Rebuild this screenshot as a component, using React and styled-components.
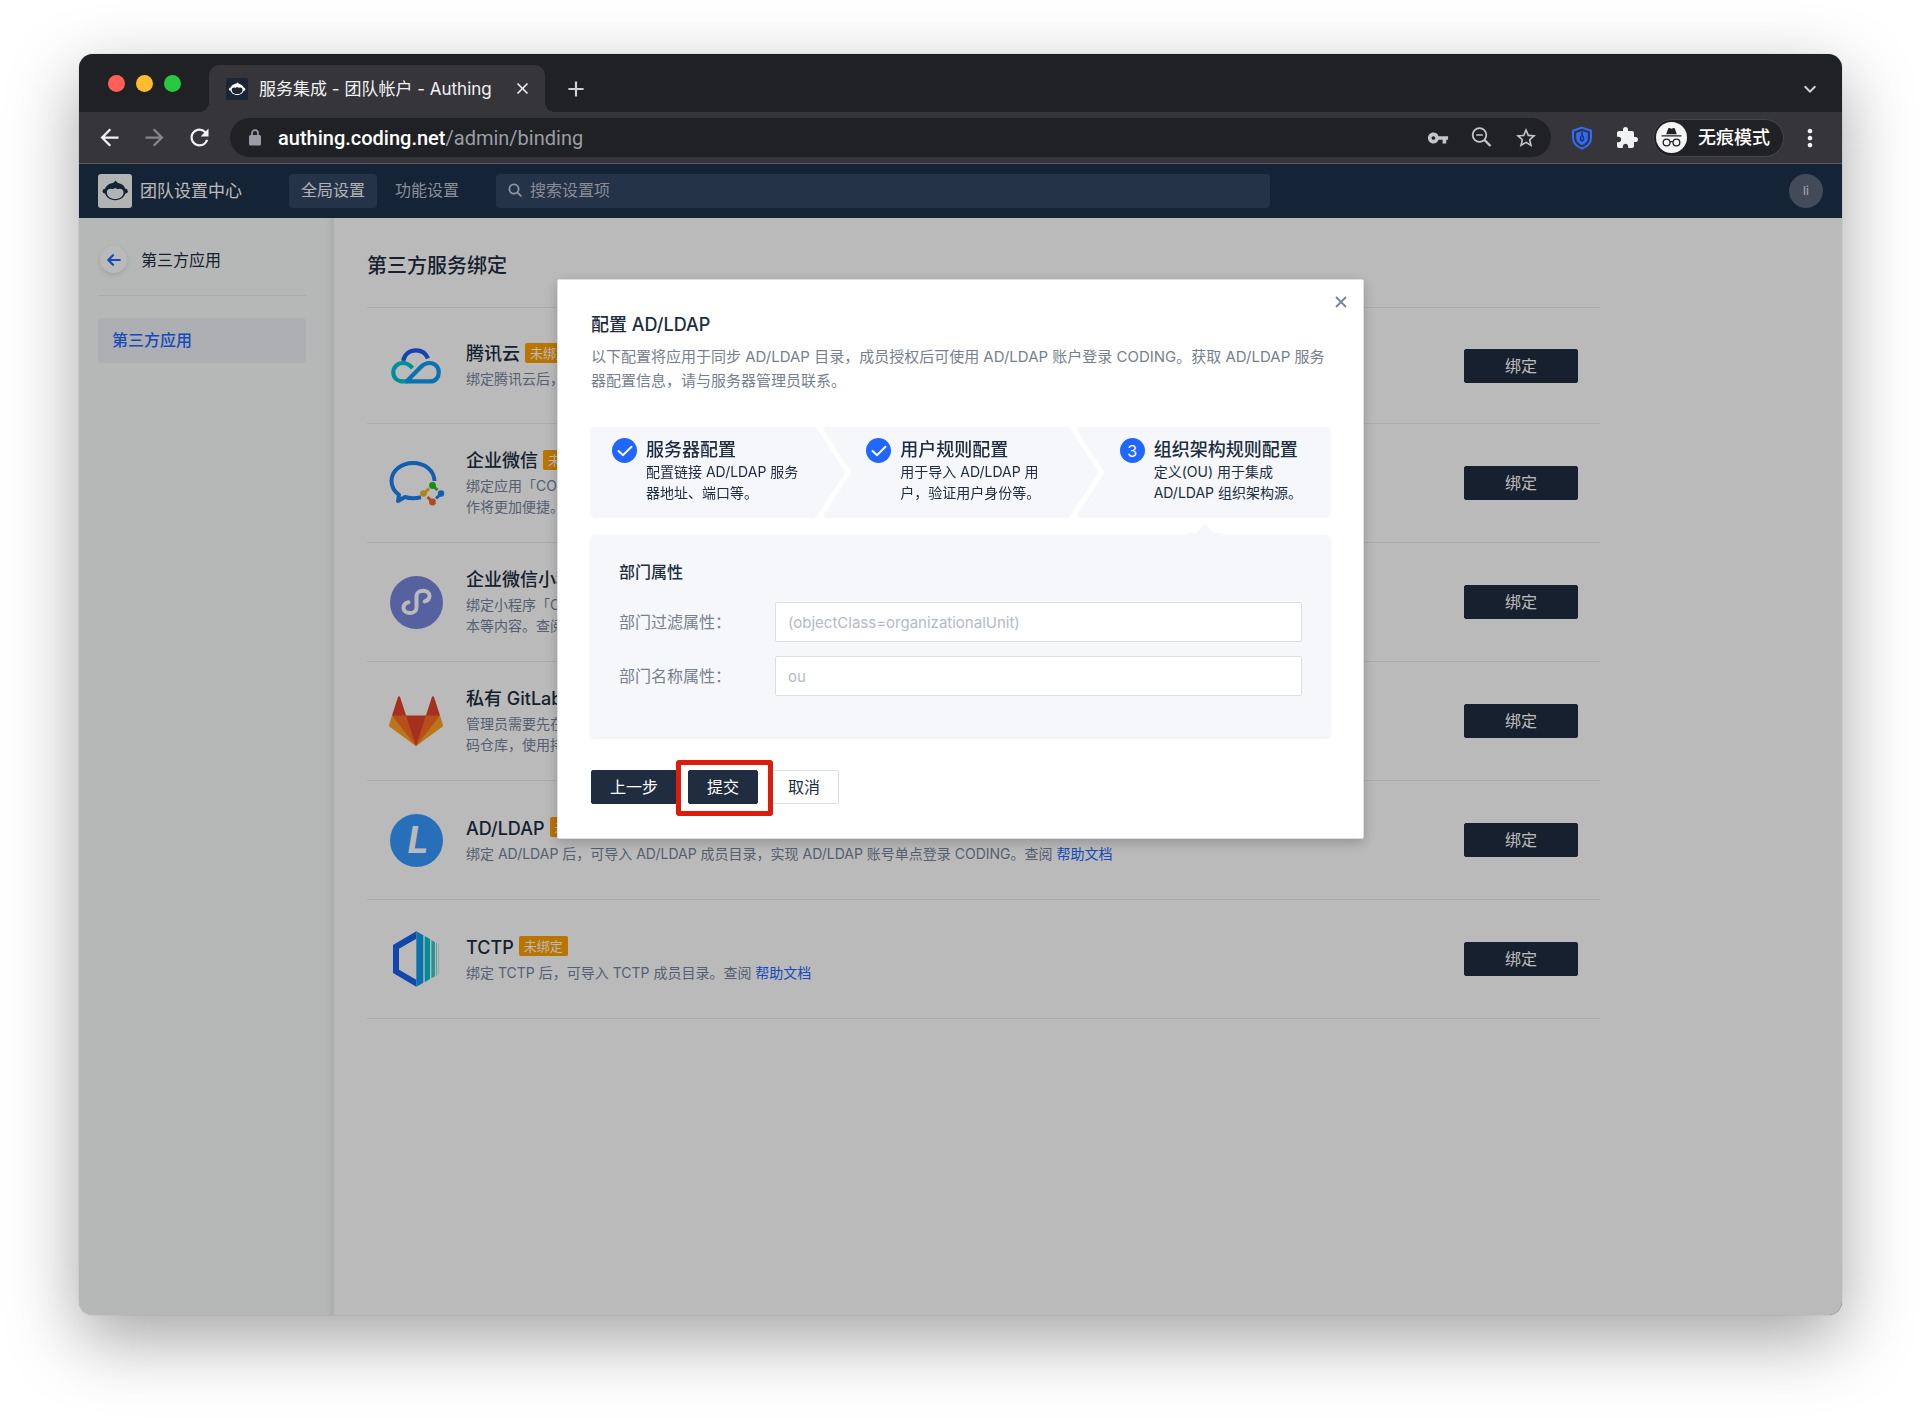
import React from "react";
import styled, { createGlobalStyle, css } from "styled-components";
import {
  MdAdd,
  MdArrowBack,
  MdArrowForward,
  MdClose,
  MdExtension,
  MdKeyboardArrowDown,
  MdMoreVert,
  MdRefresh,
  MdStarOutline,
  MdVpnKey,
} from "react-icons/md";

const ink = "#202d40";
const muted = "#76808e";
const blue = "#2066ff";

const GlobalStyle = createGlobalStyle`
  *, *::before, *::after { box-sizing: border-box; }
  body {
    margin: 0;
    background: #fff;
    color: ${ink};
    font: 400 16px/24px Inter, "Noto Sans CJK SC", sans-serif;
  }
  button, input { font: inherit; }
  a { color: inherit; text-decoration: none; }
  h1, h2, h3, p, ul { margin: 0; padding: 0; }
  svg { display: block; flex: none; }
`;

/* ---------- browser window ---------- */

const Desktop = styled.div`
  display: flex;
  min-height: 100vh;
  padding: 54px 78px 103px 79px;
`;

const Window = styled.div`
  flex: 1;
  min-width: 0;
  display: flex;
  flex-direction: column;
  overflow: hidden;
  border-radius: 14px;
  background: #202124;
  box-shadow: 0 24px 70px rgba(0, 0, 0, 0.36), 0 0 1px rgba(0, 0, 0, 0.4);
`;

const TabBar = styled.div`
  display: flex;
  align-items: center;
  height: 58px;
  padding: 0 20px 0 29px;
`;

const Lights = styled.div`
  display: flex;
  gap: 11px;
`;

const Light = styled.span`
  width: 17px;
  height: 17px;
  border-radius: 50%;
  background: ${(p) => p.$color};
`;

const Tabs = styled.div`
  flex: 1;
  align-self: flex-end;
  display: flex;
  align-items: center;
  height: 47px;
  margin-left: 28px;
`;

const flare = css`
  content: "";
  position: absolute;
  bottom: 0;
  width: 10px;
  height: 10px;
`;

const Tab = styled.div`
  position: relative;
  display: flex;
  align-items: center;
  width: 336px;
  height: 100%;
  padding: 0 13px 0 17px;
  border-radius: 10px 10px 0 0;
  background: #36353a;
  color: #f1f2f4;
  font-size: 17px;
  white-space: nowrap;
  &::before {
    ${flare}
    left: -10px;
    background: radial-gradient(circle at 0 0, transparent 10px, #36353a 10px);
  }
  &::after {
    ${flare}
    right: -10px;
    background: radial-gradient(circle at 100% 0, transparent 10px, #36353a 10px);
  }
`;

const TabTitle = styled.span`
  flex: 1;
  margin-left: 11px;
`;

const IconButton = styled.button`
  display: grid;
  place-items: center;
  padding: 0;
  border: 0;
  background: none;
  color: ${(p) => p.$color || "#f1f2f4"};
  cursor: pointer;
`;

const NewTab = styled(IconButton)`
  margin-left: 18px;
`;

const TabMenu = styled(IconButton)`
  margin-left: auto;
`;

const Toolbar = styled.div`
  display: flex;
  align-items: center;
  height: 52px;
  padding: 0 18px 0 17px;
  background: #36353a;
  border-bottom: 1px solid #5b5c60;
`;

const NavButtons = styled.div`
  display: flex;
  gap: 18px;
`;

const Address = styled.div`
  flex: 1;
  display: flex;
  align-items: center;
  gap: 20px;
  height: 39px;
  margin-left: 17px;
  padding: 0 13px 0 19px;
  border-radius: 20px;
  background: #202124;
  color: #c4c5c9;
`;

const Url = styled.div`
  flex: 1;
  display: flex;
  align-items: center;
  gap: 17px;
  color: #9b9ea6;
  font-family: Roboto, sans-serif;
  font-size: 20px;
  strong {
    color: #fff;
    font-weight: 500;
  }
`;

const Extensions = styled.div`
  display: flex;
  align-items: center;
  gap: 22px;
  margin: 0 14px 0 20px;
`;

const Incognito = styled.div`
  display: flex;
  align-items: center;
  gap: 11px;
  height: 38px;
  margin-right: 12px;
  padding: 0 13px 0 2px;
  border: 1px solid #46464b;
  border-radius: 19px;
  background: #202124;
  color: #fff;
  font-size: 18px;
  font-weight: 500;
`;

/* ---------- admin page ---------- */

const Page = styled.div`
  position: relative;
  flex: 1;
  display: flex;
  flex-direction: column;
  background: #fff;
`;

const Header = styled.header`
  display: flex;
  align-items: center;
  height: 54px;
  padding: 0 19px 1px;
  background: #1d304a;
  color: #fff;
`;

const Brand = styled.div`
  display: flex;
  align-items: center;
  gap: 8px;
  font-size: 17px;
`;

const MainNav = styled.nav`
  display: flex;
  gap: 6px;
  margin-left: 47px;
`;

const NavLink = styled.a`
  padding: 4px 12px 6px;
  border-radius: 4px;
  background: ${(p) => (p.$active ? "#334664" : "none")};
  color: ${(p) => (p.$active ? "#f4f6f8" : "#bcc4d0")};
`;

const Search = styled.label`
  flex: 0 1 774px;
  display: flex;
  align-items: center;
  gap: 8px;
  height: 34px;
  margin-left: 25px;
  padding: 0 12px 2px;
  border-radius: 4px;
  background: #334664;
  color: #c6ccd6;
  input {
    flex: 1;
    min-width: 0;
    padding: 0;
    border: 0;
    outline: 0;
    background: none;
    color: #fff;
  }
  input::placeholder {
    color: #b9c1ce;
    opacity: 1;
  }
`;

const Avatar = styled.div`
  display: grid;
  place-items: center;
  width: 34px;
  height: 34px;
  margin-left: auto;
  border-radius: 50%;
  background: #5c6879;
  color: #e4e7ec;
  font-size: 12px;
`;

const Columns = styled.div`
  flex: 1;
  display: flex;
`;

const Sidebar = styled.aside`
  flex: none;
  width: 255px;
  padding: 28px 28px 0 19px;
  background: linear-gradient(to left, #edf0f0 0, #edf0f0 3px, #f6f9f9 4px, #f9fcfb 10px);
`;

const SideHead = styled.div`
  display: flex;
  align-items: center;
  gap: 14px;
  padding: 0 2px 22px;
  border-bottom: 1px solid #e9ecec;
`;

const Back = styled(IconButton)`
  width: 27px;
  height: 27px;
  border-radius: 50%;
  background: #fff;
  box-shadow: 0 2px 5px rgba(0, 0, 0, 0.12);
`;

const SideLink = styled.a`
  display: block;
  margin-top: 22px;
  padding: 10px 14px 11px;
  border-radius: 4px;
  background: #edf0f4;
  color: ${blue};
  font-weight: 500;
`;

const Main = styled.main`
  flex: 1;
  min-width: 0;
  padding: 34px 33px;
`;

const Title = styled.h1`
  margin-bottom: 27px;
  font-size: 20px;
  font-weight: 500;
  line-height: 28px;
`;

const List = styled.ul`
  max-width: 1233px;
  border-top: 1px solid #e6e9eb;
  list-style: none;
`;

const Row = styled.li`
  display: flex;
  align-items: center;
  height: 119px;
  padding: 0 22px;
  border-bottom: 1px solid #e6e9eb;
  &:first-child {
    height: 116px;
  }
`;

const Logo = styled.div`
  display: grid;
  place-items: center;
  width: 54px;
  margin-right: 23px;
`;

const Info = styled.div`
  flex: 1;
  margin-bottom: 3px;
`;

const Name = styled.h2`
  display: flex;
  align-items: center;
  gap: 5px;
  font-size: 18px;
  font-weight: 500;
  line-height: 29px;
`;

const Badge = styled.span`
  margin-bottom: 2px;
  padding: 0 5px;
  border-radius: 2px;
  background: #ff9f00;
  color: #fff;
  font-size: 13px;
  font-weight: 400;
  line-height: 20px;
`;

const Description = styled.p`
  color: #76839b;
  font-size: 14px;
  line-height: 21px;
  white-space: nowrap;
  a {
    color: ${blue};
  }
`;

const Button = styled.button`
  height: 34px;
  padding: 0 ${(p) => (p.$wide ? 40 : 18)}px;
  border: 1px solid ${(p) => (p.$plain ? "#dadfe6" : ink)};
  border-radius: 2px;
  background: ${(p) => (p.$plain ? "#fff" : ink)};
  color: ${(p) => (p.$plain ? ink : "#fff")};
  line-height: 24px;
  white-space: nowrap;
  cursor: pointer;
`;

/* ---------- dialog ---------- */

const Overlay = styled.div`
  position: absolute;
  inset: 0;
  display: flex;
  justify-content: center;
  align-items: flex-start;
  padding-top: 115px;
  background: rgba(0, 0, 0, 0.27);
`;

const Dialog = styled.section`
  position: relative;
  width: min(807px, calc(100% - 48px));
  padding: 31px 33px 34px;
  border: 1px solid #dadfe6;
  border-radius: 2px;
  background: #fff;
  box-shadow: 0 4px 12px rgba(0, 0, 0, 0.2);
`;

const Close = styled(IconButton)`
  position: absolute;
  top: 16px;
  right: 16px;
`;

const DialogTitle = styled.h2`
  margin-bottom: 6px;
  font-size: 18px;
  font-weight: 500;
  line-height: 28px;
`;

const DialogText = styled.p`
  color: ${muted};
  font-size: 15px;
`;

const Steps = styled.div`
  display: grid;
  grid-template-columns: repeat(3, 1fr);
  margin: 34px 0 19px;
  filter: drop-shadow(0 1px 1px rgba(32, 45, 64, 0.08));
`;

const Step = styled.div`
  display: flex;
  gap: 9px;
  height: 89px;
  margin: 0 -14px;
  padding: 11px 12px 0 43px;
  border-radius: 4px;
  background: #f5f7fa;
  clip-path: polygon(0 0, calc(100% - 29px) 0, 100% 50%, calc(100% - 29px) 100%, 0 100%, 29px 50%);
  &:first-child {
    margin: 0 -7px 0 0;
    padding-left: 21px;
    clip-path: polygon(0 0, calc(100% - 29px) 0, 100% 50%, calc(100% - 29px) 100%, 0 100%);
  }
  &:last-child {
    margin: 0 0 0 -7px;
    clip-path: polygon(0 0, 100% 0, 100% 100%, 0 100%, 29px 50%);
  }
`;

const StepMark = styled.span`
  flex: none;
  display: grid;
  place-items: center;
  width: 25px;
  height: 25px;
  border-radius: 50%;
  background: ${blue};
  color: #fff;
`;

const StepTitle = styled.h3`
  font-size: 18px;
  font-weight: 500;
  line-height: 23px;
`;

const StepText = styled.p`
  max-width: 158px;
  font-size: 14px;
  line-height: 21px;
`;

const Panel = styled.form`
  position: relative;
  display: grid;
  gap: 14px;
  padding: 25px 28px 41px;
  border-radius: 4px;
  background: #f5f7fa;
  box-shadow: 0 1px 3px rgba(32, 45, 64, 0.1);
  &::before {
    content: "";
    position: absolute;
    top: -11px;
    right: 108px;
    width: 34px;
    height: 11px;
    background: #f5f7fa;
    clip-path: polygon(0 82%, 23% 82%, 50% 0, 77% 82%, 100% 82%, 100% 100%, 0 100%);
  }
`;

const PanelTitle = styled.h3`
  margin-bottom: 4px;
  font-size: 16px;
  font-weight: 500;
`;

const Field = styled.label`
  display: grid;
  grid-template-columns: 156px 1fr;
  align-items: center;
  color: ${muted};
`;

const Input = styled.input`
  width: 100%;
  height: 40px;
  padding: 0 12px;
  border: 1px solid #dadfe6;
  border-radius: 2px;
  background: #fff;
  color: ${ink};
  &::placeholder {
    color: #b3bac6;
    opacity: 1;
    font-size: 15px;
  }
`;

const Actions = styled.div`
  display: flex;
  gap: 11px;
  margin-top: 33px;
`;

const Highlight = styled.div`
  position: relative;
  display: flex;
  &::after {
    content: "";
    position: absolute;
    inset: -10px -15px -12px -12px;
    border: 5px solid #df1c0b;
    border-radius: 3px;
    pointer-events: none;
  }
`;

/* ---------- drawings ---------- */

const Monkey = ({ size, back, fore }) => (
  <svg width={size} height={size} viewBox="0 0 34 34" aria-hidden="true">
    <rect width="34" height="34" rx="3" fill={back} />
    <circle cx="7" cy="17.2" r="2.4" fill={fore} />
    <circle cx="27.4" cy="17.2" r="2.4" fill={fore} />
    <path
      fill={fore}
      d="M17.6 6.4c.8 1.2 1.8 2.2 3.2 2.9 4 .9 6.9 4 6.9 8 0 5.200-4.900 8.900-10.500 8.900S6.700 22.500 6.700 17.300c0-3.900 2.800-7 6.800-8 1.900-.4 3.200-1.500 4.100-2.900z"
    />
    <path
      fill={back}
      d="M8.900 18.400c0-2.700 2-4.100 4.700-3.500 1.500.3 2.100-.3 3.600-1 1.500.7 2.100 1.300 3.600 1 2.700-.6 4.700.8 4.700 3.500 0 4-3.900 6.500-8.300 6.500s-8.300-2.500-8.300-6.500z"
    />
  </svg>
);

const Lock = () => (
  <svg width="12" height="17" viewBox="0 0 12 17" aria-hidden="true">
    <rect y="6" width="12" height="10.500" rx="1.500" fill="#9a9ca6" />
    <path d="M3 7V4.200a3 3 0 0 1 6 0V7" fill="none" stroke="#9a9ca6" strokeWidth="1.700" />
  </svg>
);

const ZoomOut = () => (
  <svg width="25" height="25" viewBox="0 0 25 25" fill="none" stroke="currentColor" aria-hidden="true">
    <circle cx="10.500" cy="10" r="6.800" strokeWidth="1.800" />
    <path d="M15.500 15l6 6" strokeWidth="2.400" />
    <path d="M7.200 10h6.600" strokeWidth="1.600" />
  </svg>
);

const Shield = () => (
  <svg width="22" height="24" viewBox="0 0 22 24" fill="none" stroke="#2f6bff" aria-hidden="true">
    <path strokeWidth="2" d="M11 1.600l9 3.200v7c0 5-3.500 8.700-9 10.800-5.500-2.100-9-5.800-9-10.800v-7z" />
    <path
      fill="#2f6bff"
      stroke="none"
      d="M11 5l5.800 2v5c0 3.200-2.300 5.600-5.800 7.200-3.500-1.600-5.800-4-5.800-7.200V7z"
    />
    <path stroke="#22305c" strokeWidth="1.500" d="M11 5.500v4M11 9.500c-2 1.500-2.200 4-.2 5.800M11.200 9.500c2 1.500 2 4 0 5.800" />
  </svg>
);

const Spy = () => (
  <svg width="31" height="31" viewBox="0 0 31 31" aria-hidden="true">
    <circle cx="15.500" cy="15.500" r="15.500" fill="#f4f4f5" />
    <path fill="#202124" d="M10.200 12.200l2-5.600c.2-.6.8-.8 1.300-.6l2 .7 2-.7c.5-.2 1.100 0 1.300.6l2 5.600z" />
    <path fill="#202124" d="M5.500 13.300h20v1.300h-20z" />
    <g fill="none" stroke="#202124" strokeWidth="1.300">
      <circle cx="10.600" cy="20.500" r="3.400" />
      <circle cx="20.400" cy="20.500" r="3.400" />
      <path d="M14 20c1-.6 2-.6 3 0" />
    </g>
  </svg>
);

const SearchIcon = () => (
  <svg width="14" height="14" viewBox="0 0 14 14" fill="none" stroke="currentColor" strokeWidth="1.800" strokeLinecap="round" aria-hidden="true">
    <circle cx="6" cy="6" r="4.600" />
    <path d="M9.600 9.600l3.200 3.200" />
  </svg>
);

const BackArrow = () => (
  <svg width="14" height="12" viewBox="0 0 14 12" fill="none" stroke={blue} strokeWidth="2.200" strokeLinecap="round" strokeLinejoin="round" aria-hidden="true">
    <path d="M6 1.200L1.300 6 6 10.800M1.600 6h11.200" />
  </svg>
);

const Check = () => (
  <svg width="16" height="12" viewBox="0 0 16 12" fill="none" stroke="#fff" strokeWidth="2" strokeLinecap="round" aria-hidden="true">
    <path d="M1.500 6l4.500 4.200L14.500 1.800" />
  </svg>
);

const Cross = () => (
  <svg width="12" height="12" viewBox="0 0 12 12" stroke="#76839b" strokeWidth="1.800" aria-hidden="true">
    <path d="M1 1l10 10M11 1L1 11" />
  </svg>
);

const CloudLogo = () => (
  <svg width="50" height="36" viewBox="0 0 50 36" fill="none" strokeWidth="4.200" aria-hidden="true">
    <path stroke="#1c5cf5" d="M12.200 12.800C13.500 6.500 18.500 2.400 25 2.400c5.400 0 10 3.200 12 8" />
    <path stroke="#00c3cf" d="M21.500 20.200C19 17.200 15.800 15 12 15 6.500 15 2.300 19 2.300 24.200c0 5.400 4 9.200 10.400 9.200h4" />
    <path stroke="#109cf0" d="M14.500 33.400h25c5 0 8.300-4 8.300-9.200 0-5.500-4.200-9.200-9.400-9.200-3.600 0-6.200 1.600-8.600 4L16 33" />
  </svg>
);

const ChatLogo = () => (
  <svg width="56" height="46" viewBox="0 0 56 46" aria-hidden="true">
    <path
      fill="none"
      stroke="#1a83f0"
      strokeWidth="4"
      strokeLinejoin="round"
      d="M45.500 21C45 10.500 36 3 24 3S2.500 11 2.500 21c0 6 3 10.500 7.500 13.800L9 41l7-4c4.500 1.500 10 1.600 16 .3"
    />
    <g strokeWidth="3">
      <path stroke="#2dbc22" d="M43.500 25.500l5 4.500" />
      <path stroke="#1a83f0" d="M52 33.500l-5 5" />
      <path stroke="#f4662a" d="M43.500 42l-5-5" />
      <path stroke="#f8b02c" d="M35 33.500l5-5" />
    </g>
    <circle cx="43.500" cy="25.500" r="3.400" fill="#2dbc22" />
    <circle cx="52" cy="33.500" r="3.200" fill="#1a83f0" />
    <circle cx="43.500" cy="42" r="3.400" fill="#f4662a" />
    <circle cx="34.500" cy="33.500" r="3.300" fill="#f8b02c" />
  </svg>
);

const MiniLogo = () => (
  <svg width="53" height="53" viewBox="0 0 53 53" aria-hidden="true">
    <circle cx="26.500" cy="26.500" r="26.500" fill="#7786dc" />
    <path
      fill="none"
      stroke="#fff"
      strokeWidth="4"
      strokeLinecap="round"
      d="M18.500 26.200c-3 .8-5 3-5 5.500 0 3.200 2.900 5.300 6.300 5.300 3.700 0 6.700-2.300 6.700-5.600V20c0-3 2.900-5.200 6.500-5.200s6.500 2 6.500 5.200c0 2.500-1.900 4.500-4.800 5.400"
    />
  </svg>
);

const FoxLogo = () => (
  <svg width="54" height="51" viewBox="0 1 36 34" aria-hidden="true">
    <path fill="#e24329" d="M2 14l9.380 9v-9l-4-12.280c-.205-.632-1.176-.632-1.380 0z" />
    <path fill="#e24329" d="M34 14l-9.380 9v-9l4-12.280c.205-.632 1.176-.632 1.380 0z" />
    <path fill="#e24329" d="M18 34.380L3 14h30z" />
    <path fill="#fc6d26" d="M18 34.380L11.380 14H2l4 11z" />
    <path fill="#fc6d26" d="M18 34.380L24.620 14H34l-4 11z" />
    <path fill="#fca326" d="M2 14L.1 20.160c-.18.565 0 1.200.5 1.560L18.020 34.380z" />
    <path fill="#fca326" d="M34 14l1.900 6.160c.18.565 0 1.200-.5 1.560L18 34.380z" />
  </svg>
);

const LdapLogo = () => (
  <svg width="53" height="53" viewBox="0 0 53 53" aria-hidden="true">
    <circle cx="26.500" cy="26.500" r="26.500" fill="#3898ff" />
    <text x="28" y="39" textAnchor="middle" fill="#fff" fontFamily="Inter, sans-serif" fontSize="37" fontWeight="700" fontStyle="italic">
      L
    </text>
  </svg>
);

const HexLogo = () => (
  <svg width="48" height="56" viewBox="37 92 144 168" aria-hidden="true">
    <path fill="#1b60ea" d="M110 93v22l-52 30v63l52 30v21l-70-41v-84z" />
    <path fill="#109bea" d="M110 93l21 12v142l-21 12z" />
    <path fill="#00c3cc" d="M135 107l16 9v120l-16 10z" />
    <path fill="#38c8d0" d="M155 119l11 7v102l-11 6z" />
    <path fill="#8ad6dc" d="M169 127l3 2v96l-3 2z" />
    <path fill="#a8dce2" d="M175 131l2 1v90l-2 1z" />
  </svg>
);

/* ---------- content ---------- */

const help = <a href="#help">帮助文档</a>;

const services = [
  { name: "腾讯云", logo: <CloudLogo />, lines: ["绑定腾讯云后，"] },
  { name: "企业微信", logo: <ChatLogo />, lines: ["绑定应用「CODING", "作将更加便捷。"] },
  { name: "企业微信小程序", logo: <MiniLogo />, lines: ["绑定小程序「CO", "本等内容。查阅"] },
  { name: "私有 GitLab", logo: <FoxLogo />, lines: ["管理员需要先在", "码仓库，使用持"] },
  {
    name: "AD/LDAP",
    logo: <LdapLogo />,
    lines: [<>绑定 AD/LDAP 后，可导入 AD/LDAP 成员目录，实现 AD/LDAP 账号单点登录 CODING。查阅 {help}</>],
  },
  { name: "TCTP", logo: <HexLogo />, lines: [<>绑定 TCTP 后，可导入 TCTP 成员目录。查阅 {help}</>] },
];

const steps = [
  { mark: <Check />, title: "服务器配置", text: "配置链接 AD/LDAP 服务器地址、端口等。" },
  { mark: <Check />, title: "用户规则配置", text: "用于导入 AD/LDAP 用户，验证用户身份等。" },
  { mark: "3", title: "组织架构规则配置", text: "定义(OU) 用于集成 AD/LDAP 组织架构源。" },
];

export default function App() {
  return (
    <Desktop>
      <GlobalStyle />
      <Window>
        <TabBar>
          <Lights>
            <Light $color="#ff5f57" />
            <Light $color="#febc2e" />
            <Light $color="#28c840" />
          </Lights>
          <Tabs>
            <Tab>
              <Monkey size={22} back="#1a2635" fore="#fff" />
              <TabTitle>服务集成 - 团队帐户 - Authing</TabTitle>
              <IconButton aria-label="关闭标签页">
                <MdClose size={19} />
              </IconButton>
            </Tab>
            <NewTab aria-label="新标签页" $color="#cfd0d3">
              <MdAdd size={26} />
            </NewTab>
            <TabMenu aria-label="标签页列表" $color="#cfd0d3">
              <MdKeyboardArrowDown size={24} />
            </TabMenu>
          </Tabs>
        </TabBar>
        <Toolbar>
          <NavButtons>
            <IconButton aria-label="后退">
              <MdArrowBack size={27} />
            </IconButton>
            <IconButton aria-label="前进" $color="#85868a">
              <MdArrowForward size={27} />
            </IconButton>
            <IconButton aria-label="刷新">
              <MdRefresh size={27} />
            </IconButton>
          </NavButtons>
          <Address>
            <Url>
              <Lock />
              <span>
                <strong>authing.coding.net</strong>/admin/binding
              </span>
            </Url>
            <MdVpnKey size={22} />
            <ZoomOut />
            <MdStarOutline size={24} />
          </Address>
          <Extensions>
            <Shield />
            <MdExtension size={24} color="#f1f2f4" />
          </Extensions>
          <Incognito>
            <Spy />
            无痕模式
          </Incognito>
          <IconButton aria-label="菜单">
            <MdMoreVert size={28} />
          </IconButton>
        </Toolbar>
        <Page>
          <Header>
            <Brand>
              <Monkey size={34} back="#f4f7f6" fore="#1d304a" />
              团队设置中心
            </Brand>
            <MainNav>
              <NavLink href="#global" $active>
                全局设置
              </NavLink>
              <NavLink href="#feature">功能设置</NavLink>
            </MainNav>
            <Search>
              <SearchIcon />
              <input type="search" placeholder="搜索设置项" aria-label="搜索设置项" />
            </Search>
            <Avatar>li</Avatar>
          </Header>
          <Columns>
            <Sidebar>
              <SideHead>
                <Back aria-label="返回">
                  <BackArrow />
                </Back>
                第三方应用
              </SideHead>
              <SideLink href="#apps">第三方应用</SideLink>
            </Sidebar>
            <Main>
              <Title>第三方服务绑定</Title>
              <List>
                {services.map((s) => (
                  <Row key={s.name}>
                    <Logo>{s.logo}</Logo>
                    <Info>
                      <Name>
                        {s.name}
                        <Badge>未绑定</Badge>
                      </Name>
                      {s.lines.map((line, i) => (
                        <Description key={i}>{line}</Description>
                      ))}
                    </Info>
                    <Button $wide>绑定</Button>
                  </Row>
                ))}
              </List>
            </Main>
          </Columns>
          <Overlay>
            <Dialog role="dialog" aria-labelledby="dialog-title">
              <Close aria-label="关闭">
                <Cross />
              </Close>
              <DialogTitle id="dialog-title">配置 AD/LDAP</DialogTitle>
              <DialogText>
                以下配置将应用于同步 AD/LDAP 目录，成员授权后可使用 AD/LDAP 账户登录 CODING。获取 AD/LDAP 服务器配置信息，请与服务器管理员联系。
              </DialogText>
              <Steps>
                {steps.map((s) => (
                  <Step key={s.title}>
                    <StepMark>{s.mark}</StepMark>
                    <div>
                      <StepTitle>{s.title}</StepTitle>
                      <StepText>{s.text}</StepText>
                    </div>
                  </Step>
                ))}
              </Steps>
              <Panel id="ldap-form">
                <PanelTitle>部门属性</PanelTitle>
                <Field>
                  部门过滤属性：
                  <Input placeholder="(objectClass=organizationalUnit)" />
                </Field>
                <Field>
                  部门名称属性：
                  <Input placeholder="ou" />
                </Field>
              </Panel>
              <Actions>
                <Button type="button">上一步</Button>
                <Highlight>
                  <Button type="submit" form="ldap-form">
                    提交
                  </Button>
                </Highlight>
                <Button type="button" $plain>
                  取消
                </Button>
              </Actions>
            </Dialog>
          </Overlay>
        </Page>
      </Window>
    </Desktop>
  );
}
